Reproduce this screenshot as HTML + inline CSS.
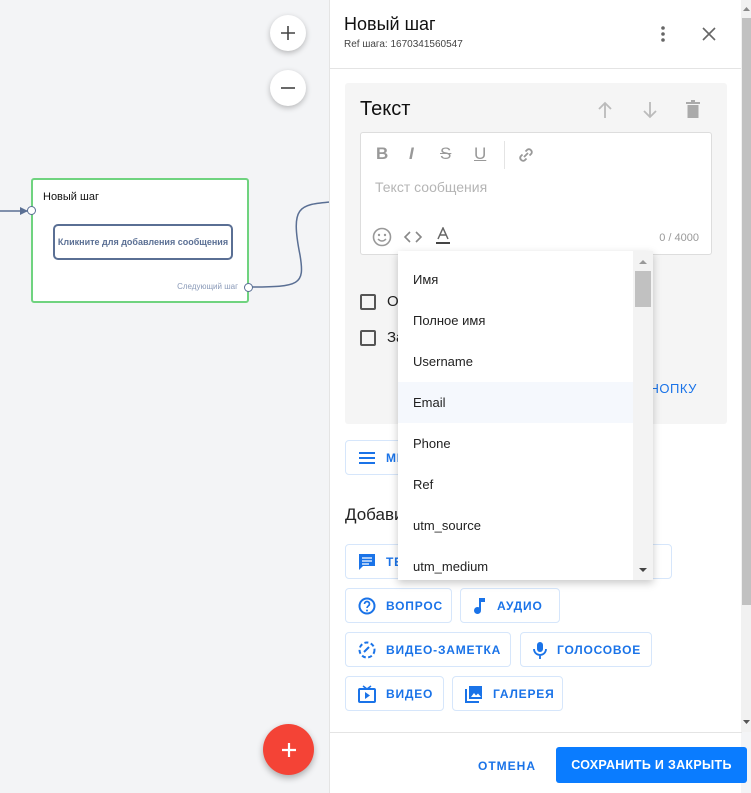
<!DOCTYPE html>
<html><head><meta charset="utf-8">
<style>
*{box-sizing:border-box;margin:0;padding:0}
body{width:751px;height:793px;overflow:hidden;font-family:"Liberation Sans","Noto Sans CJK SC",sans-serif;background:#f3f4f6;position:relative}
.abs{position:absolute}
.round{position:absolute;border-radius:50%;background:#fff;box-shadow:0 2px 6px rgba(0,0,0,.25);display:flex;align-items:center;justify-content:center}
.panel{position:absolute;left:329px;top:0;width:412px;height:793px;background:#fff;border-left:1px solid #e4e4e4}
.btn{position:absolute;height:35px;border:1px solid #d6e6fb;border-radius:4px;background:#fff;color:#1a73e8;font-size:12px;font-weight:bold;letter-spacing:.8px;display:flex;align-items:center;padding-left:12px;white-space:nowrap}
.btn svg{margin-right:10px;flex:none}
.dd{position:absolute;left:398px;top:251px;width:255px;height:329px;background:#fff;box-shadow:0 3px 8px rgba(0,0,0,.22);overflow:hidden}
.dd div{height:41px;line-height:41px;padding-left:15px;font-size:13px;color:#222}
.tb{position:absolute;top:11px;font-size:17px;font-weight:bold;color:#999}
</style></head><body>
<div class="round" style="left:270px;top:15px;width:36px;height:36px"><svg width="16" height="16"><path d="M8 1v14M1 8h14" stroke="#444" stroke-width="1.6"/></svg></div>
<div class="round" style="left:270px;top:70px;width:36px;height:36px"><svg width="16" height="16"><path d="M1 8h14" stroke="#444" stroke-width="1.6"/></svg></div>
<svg class="abs" style="left:0;top:0" width="340" height="320">
<path d="M0 211H28" stroke="#5a6f94" stroke-width="1.5" fill="none"/>
<path d="M20 207l8 4-8 4z" fill="#5a6f94"/>
<path d="M249 287C300 287 305 285 300 255C290 205 300 205 330 202" stroke="#5a6f94" stroke-width="1.5" fill="none"/>
</svg>
<div class="abs" style="left:31px;top:178px;width:218px;height:125px;background:#fff;border:2px solid #6fd37f;border-radius:3px">
<div class="abs" style="left:10px;top:11px;font-size:11px;color:#111">Новый шаг</div>
<div class="abs" style="left:20px;top:44px;width:180px;height:36px;border:2px solid #5a6f94;border-radius:5px;font-size:9px;font-weight:bold;color:#5a6f94;text-align:center;line-height:32px">Кликните для добавления сообщения</div>
<div class="abs" style="right:9px;top:102px;font-size:8px;color:#8a9ab8">Следующий шаг</div>
</div>
<div class="abs" style="left:27px;top:206px;width:9px;height:9px;border-radius:50%;background:#fff;border:1px solid #5a6f94"></div>
<div class="abs" style="left:244px;top:283px;width:9px;height:9px;border-radius:50%;background:#fff;border:1px solid #5a6f94"></div>
<div class="abs" style="left:263px;top:724px;width:51px;height:51px;border-radius:50%;background:#f44336;box-shadow:0 3px 7px rgba(0,0,0,.3);display:flex;align-items:center;justify-content:center"><svg width="16" height="16"><path d="M8 1v14M1 8h14" stroke="#fff" stroke-width="2.2"/></svg></div>

<div class="panel">
<div class="abs" style="left:14px;top:14px;font-size:18px;color:#111">Новый шаг</div>
<div class="abs" style="left:14px;top:39px;font-size:10px;color:#444">Ref шага: 1670341560547</div>
<svg class="abs" style="left:330px;top:25px" width="6" height="18"><circle cx="3" cy="3" r="1.8" fill="#666"/><circle cx="3" cy="9" r="1.8" fill="#666"/><circle cx="3" cy="15" r="1.8" fill="#666"/></svg>
<svg class="abs" style="left:372px;top:27px" width="14" height="14"><path d="M1 1l12 12M13 1L1 13" stroke="#666" stroke-width="1.6"/></svg>
<div class="abs" style="left:0;top:68px;width:412px;height:1px;background:#e4e4e4"></div>

<div class="abs" style="left:15px;top:83px;width:382px;height:341px;background:#f5f5f5;border-radius:3px">
<div class="abs" style="left:15px;top:15px;font-size:20px;color:#111">Текст</div>
<svg class="abs" style="left:252px;top:18px" width="16" height="18"><path d="M8 17V2M2 8l6-6 6 6" stroke="#bbb" stroke-width="1.8" fill="none"/></svg>
<svg class="abs" style="left:297px;top:18px" width="16" height="18"><path d="M8 1v15M2 10l6 6 6-6" stroke="#bbb" stroke-width="1.8" fill="none"/></svg>
<svg class="abs" style="left:341px;top:17px" width="14" height="18"><path d="M0 2h14v2H0zM5 0h4v2H5zM1.5 5h11v13h-11z" fill="#aaa"/></svg>
<div class="abs" style="left:15px;top:49px;width:352px;height:123px;background:#fff;border:1px solid #ddd;border-radius:3px">
<div class="tb" style="left:15px">B</div>
<div class="tb" style="left:48px;font-style:italic">I</div>
<div class="tb" style="left:79px;font-weight:normal;text-decoration:line-through">S</div>
<div class="tb" style="left:113px;font-weight:normal;text-decoration:underline">U</div>
<div class="abs" style="left:143px;top:8px;width:1px;height:28px;background:#e4e4e4"></div>
<svg class="abs" style="left:155px;top:12px" width="20" height="20"><path d="M8 12l4-4M6.5 9.5l-2 2a3 3 0 004 4l2-2M13.5 10.5l2-2a3 3 0 00-4-4l-2 2" stroke="#999" stroke-width="1.8" fill="none"/></svg>
<div class="abs" style="left:14px;top:46px;font-size:14px;color:#b5b5b5">Текст сообщения</div>
<svg class="abs" style="left:11px;top:94px" width="20" height="20"><circle cx="10" cy="10" r="8.5" stroke="#999" stroke-width="1.6" fill="none"/><circle cx="7" cy="8" r="1.2" fill="#999"/><circle cx="13" cy="8" r="1.2" fill="#999"/><path d="M6 12q4 4 8 0" stroke="#999" stroke-width="1.5" fill="none"/></svg>
<svg class="abs" style="left:42px;top:98px" width="20" height="12"><path d="M7 1L2 6l5 5M13 1l5 5-5 5" stroke="#888" stroke-width="1.6" fill="none"/></svg>
<svg class="abs" style="left:75px;top:94px" width="14" height="18"><path d="M2 12L7 1l5 11M4 8h6" stroke="#666" stroke-width="1.5" fill="none"/><path d="M0 16h14" stroke="#444" stroke-width="2"/></svg>
<div class="abs" style="right:12px;top:99px;font-size:11px;color:#999">0 / 4000</div>
</div>
<div class="abs" style="left:15px;top:211px;width:16px;height:16px;border:2px solid #555;border-radius:2px"></div>
<div class="abs" style="left:42px;top:210px;font-size:15px;color:#222">Отключить</div>
<div class="abs" style="left:15px;top:247px;width:16px;height:16px;border:2px solid #555;border-radius:2px"></div>
<div class="abs" style="left:42px;top:246px;font-size:15px;color:#222">Защитить</div>
<div class="abs" style="left:218px;top:298px;font-size:13px;color:#1a73e8;letter-spacing:.5px">ДОБАВИТЬ КНОПКУ</div>
</div>

<div class="btn" style="left:15px;top:440px;width:120px"><svg width="18" height="14"><path d="M1 2h16M1 7h16M1 12h16" stroke="#1a73e8" stroke-width="2"/></svg>МЕНЮ</div>
<div class="abs" style="left:15px;top:505px;font-size:17px;color:#222">Добавить сообщение</div>
<div class="btn" style="left:15px;top:544px;width:120px"><svg width="18" height="18"><path d="M1 1h16v12H5l-4 4z" fill="#1a73e8"/><path d="M4 5h10M4 8h10M4 11h7" stroke="#fff" stroke-width="1.3"/></svg>ТЕКСТ</div>
<div class="btn" style="left:140px;top:544px;width:202px">ИЗОБРАЖЕНИЕ</div>
<div class="btn" style="left:15px;top:588px;width:107px"><svg width="18" height="18"><circle cx="9" cy="9" r="7.5" stroke="#1a73e8" stroke-width="2" fill="none"/><path d="M6.5 7a2.5 2.5 0 115 0c0 2-2.5 2-2.5 4" stroke="#1a73e8" stroke-width="1.7" fill="none"/><circle cx="9" cy="13.5" r="1" fill="#1a73e8"/></svg>ВОПРОС</div>
<div class="btn" style="left:130px;top:588px;width:100px"><svg width="14" height="18"><path d="M7 1v12" stroke="#1a73e8" stroke-width="2"/><circle cx="4.5" cy="13.5" r="3.5" fill="#1a73e8"/><path d="M7 1h5v4H7z" fill="#1a73e8"/></svg>АУДИО</div>
<div class="btn" style="left:15px;top:632px;width:166px"><svg width="18" height="18"><circle cx="9" cy="9" r="7.5" stroke="#1a73e8" stroke-width="2" stroke-dasharray="4 2.5" fill="none"/><path d="M6 11l5-5" stroke="#1a73e8" stroke-width="2"/></svg>ВИДЕО-ЗАМЕТКА</div>
<div class="btn" style="left:190px;top:632px;width:132px"><svg width="14" height="18"><rect x="4" y="1" width="6" height="10" rx="3" fill="#1a73e8"/><path d="M1 8a6 6 0 0012 0M7 14v4" stroke="#1a73e8" stroke-width="1.8" fill="none"/></svg>ГОЛОСОВОЕ</div>
<div class="btn" style="left:15px;top:676px;width:99px"><svg width="18" height="18"><path d="M5 1l4 3 4-3" stroke="#1a73e8" stroke-width="1.5" fill="none"/><rect x="1" y="4" width="16" height="13" rx="1" stroke="#1a73e8" stroke-width="2" fill="none"/><path d="M7 7v7l5-3.5z" fill="#1a73e8"/></svg>ВИДЕО</div>
<div class="btn" style="left:122px;top:676px;width:111px"><svg width="18" height="18"><path d="M1 4v13h13" stroke="#1a73e8" stroke-width="2" fill="none"/><rect x="4" y="1" width="13" height="13" fill="#1a73e8"/><path d="M6 12l3-4 2 2.5 2-2 3 3.5z" fill="#fff"/></svg>ГАЛЕРЕЯ</div>

<div class="abs" style="left:0;top:732px;width:412px;height:1px;background:#e4e4e4"></div>
<div class="abs" style="left:148px;top:759px;font-size:12px;font-weight:bold;color:#1a73e8;letter-spacing:1px">ОТМЕНА</div>
<div class="abs" style="left:226px;top:747px;width:191px;height:36px;background:#0a7cff;border-radius:3px;color:#fff;font-size:12.5px;font-weight:bold;letter-spacing:.3px;text-align:center;line-height:36px;white-space:nowrap">СОХРАНИТЬ И ЗАКРЫТЬ</div>
</div>

<div class="abs" style="left:741px;top:0;width:10px;height:732px;background:#f1f1f1"></div>
<div class="abs" style="left:742px;top:18px;width:9px;height:587px;background:#c1c1c1"></div>
<svg class="abs" style="left:742px;top:6px" width="9" height="6"><path d="M1 5l3.5-4 3.5 4z" fill="#888"/></svg>
<svg class="abs" style="left:742px;top:719px" width="9" height="6"><path d="M1 1l3.5 4 3.5-4z" fill="#555"/></svg>

<div class="dd">
<div style="margin-top:8px">Имя</div>
<div>Полное имя</div>
<div>Username</div>
<div style="background:#f5f8fd">Email</div>
<div>Phone</div>
<div>Ref</div>
<div>utm_source</div>
<div>utm_medium</div>
<div class="abs" style="left:235px;top:0;width:20px;height:329px;background:#f3f3f3;padding:0"></div>
<div class="abs" style="left:237px;top:20px;width:16px;height:36px;background:#c1c1c1;padding:0"></div>
<svg class="abs" style="left:240px;top:8px" width="10" height="6"><path d="M1 5l4-4 4 4z" fill="#999"/></svg>
<svg class="abs" style="left:240px;top:316px" width="10" height="6"><path d="M1 1l4 4 4-4z" fill="#444"/></svg>
</div>
</body></html>
